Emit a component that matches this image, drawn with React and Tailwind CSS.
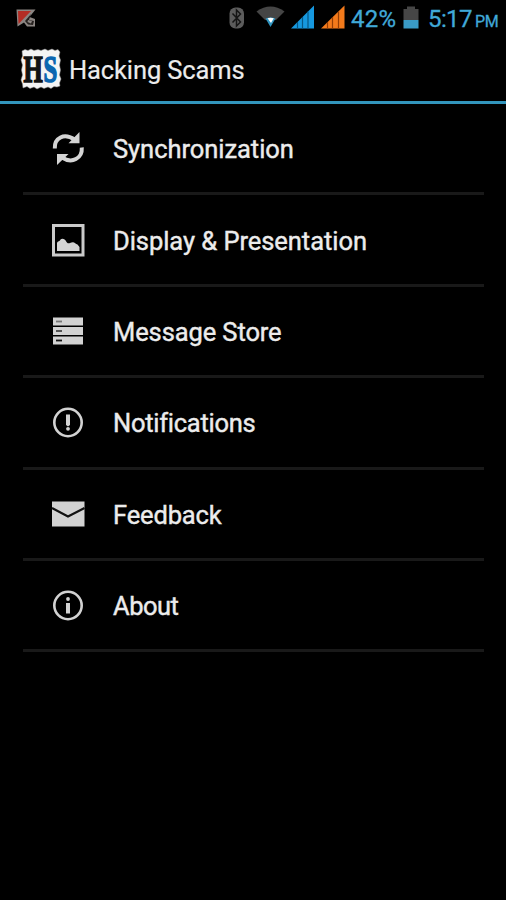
const items = [
  { label: "Synchronization", tracking: "tracking-[-0.05px]", Icon: SyncIcon },
  { label: "Display & Presentation", tracking: "tracking-[-0.05px]", Icon: PictureIcon },
  { label: "Message Store", tracking: "tracking-[-0.1px]", Icon: StoreIcon },
  { label: "Notifications", tracking: "tracking-[-0.27px]", Icon: AlertIcon },
  { label: "Feedback", tracking: "tracking-[-0.15px]", Icon: MailIcon },
  { label: "About", tracking: "tracking-[-0.5px]", Icon: InfoIcon },
]

export default function App() {
  return (
    <div className="h-[900px] w-[506px] overflow-hidden bg-black font-['Roboto',sans-serif]">
      <StatusBar />

      {/* HEADER */}
      <header className="flex h-[67px] items-center border-b-3 border-[#3295bc] pl-5">
        <Logo />
        <h1 className="ml-[7px] pt-[2px] text-[25.5px] leading-8 tracking-[-0.12px] text-[#ececec] [-webkit-text-stroke:0.2px_#ececec]">Hacking Scams</h1>
      </header>

      {/* SETTINGS */}
      <ul className="pl-[23px] pr-[22px]">
        {items.map(({ label, tracking, Icon }) => (
          <li key={label} className="flex h-[91.4px] items-center border-b-3 border-[#191919] pl-[27px]">
            <Icon />
            <span className={`ml-[27px] pt-[2px] text-[25.5px] leading-8 text-[#ececec] [-webkit-text-stroke:0.4px_#ececec] ${tracking}`}>{label}</span>
          </li>
        ))}
      </ul>
    </div>
  )
}

function StatusBar() {
  return (
    <div className="flex h-[37px] items-center whitespace-nowrap text-[#40a9d8] [-webkit-text-stroke:0.3px_#40a9d8]">
      <svg className="ml-4 h-[37px] w-5" viewBox="16 0 20 37">
        <path d="M16.500 9.500H35.500L29.500 17L35 19V26.500H27L24 22.500L17.500 26.500Z" fill="#8b8582" />
        <path d="M18 11H31L18.500 24Z" fill="#b42d25" />
        <path d="M25 21L31 14L29 20L34 21L33 25L28 24.500Z" fill="#26211f" />
        <path d="M28 20L32 21L31 23.500L27.500 22Z" fill="#8b8582" />
      </svg>

      <svg className="ml-[192px] h-[37px] w-[118px]" viewBox="228 0 118 37">
        <rect x="229.500" y="7.500" width="14.500" height="21" rx="6" fill="#5c5c5c" />
        <path d="M232.500 13.500L240.500 22L236.500 26V10L240.500 14L232.500 22.500" fill="none" stroke="#151515" strokeWidth="1.500" />
        <path d="M256.500 11.500Q270.500 1.500 284.500 11.500L276 20H265Z" fill="#454545" />
        <path d="M265.500 18.500Q270.500 16.500 275.500 18.500L270.500 27Z" fill="#2e93bf" />
        <path d="M267.500 18.200Q270.500 17.200 273.800 18.200L271 23Z" fill="#fff" />
        <path d="M291 28.500L314 5.500V28.500Z" fill="#1698df" />
        <path d="M297.500 22V28.500M302.500 17V28.500M308 11.500V28.500" stroke="#075784" strokeWidth="1.200" />
        <path d="M321 28.500L344.500 5.500V28.500Z" fill="#f37a1b" />
        <path d="M327.500 22V28.500M332.500 17V28.500M338.500 11.500V28.500" stroke="#943e05" strokeWidth="1.200" />
      </svg>

      <span className="ml-[5px] w-[46px] pt-[2px] text-2xl leading-[37px] tracking-[0.2px]">42%</span>

      <svg className="ml-[6px] h-[37px] w-4" viewBox="403 0 16 37">
        <path d="M403.500 9H407V6.500H415V9H418.500V20H403.500Z" fill="#464646" />
        <rect x="403.500" y="20" width="15" height="8.500" fill="#3a9bc6" />
      </svg>

      <div className="ml-[9px] flex items-baseline pt-[3px]">
        <span className="w-[47px] text-2xl leading-[37px] tracking-[-0.6px]">5:17</span>
        <span className="text-base leading-[37px] tracking-[-0.3px]">PM</span>
      </div>
    </div>
  )
}

function Logo() {
  return (
    <svg className="h-[42px] w-[42px]" viewBox="0 0 42 42">
      <path
        d="M2 3L5 1.500L8 2.500L11 1L14 2.500L18 1.500L21 2.500L25 1L28 2.500L32 1L35 2.500L38 1.500L40 4L39 8L40.500 12L39.500 17L40.500 22L39.500 27L41 31L39.500 35L40 38L37 39L34 38.500L31 40.500L28 39L24 40.500L21 39L17 41L14 39L10 40.500L7 38.500L3 40L2.500 36L1 32L2.500 27L1.500 22L2.500 17L1 12L2.500 8Z"
        fill="#f4f4f4"
        stroke="#8c8c8c"
        strokeWidth="0.500"
      />
      <g transform="scale(0.65 1)" fontFamily="Liberation Serif, serif" fontWeight="700" fontSize="38">
        <text x="5.500" y="33.500" fill="#111" stroke="#111" strokeWidth="1.600">H</text>
        <text x="36" y="33.500" fill="#0b66b0" stroke="#0b66b0" strokeWidth="1.600">S</text>
      </g>
    </svg>
  )
}

function IconBox({ children }) {
  return (
    <svg className="h-9 w-9 shrink-0" viewBox="0 0 36 36" fill="none">
      {children}
    </svg>
  )
}

function SyncIcon() {
  return (
    <IconBox>
      <path d="M4.800 18.500C4.200 8 14 2.500 24.500 9.500" stroke="#d4d4d4" strokeWidth="4" />
      <path d="M29.500 2V13.300H18.500Z" fill="#d4d4d4" />
      <path d="M31.800 17.500C32.500 28.500 22 34 12 27.500" stroke="#d4d4d4" strokeWidth="4" />
      <path d="M7 35V24H18.500Z" fill="#d4d4d4" />
    </IconBox>
  )
}

function PictureIcon() {
  return (
    <IconBox>
      <rect x="3.500" y="3.500" width="29.500" height="29.500" stroke="#cacaca" strokeWidth="3" />
      <path d="M7 29V21C8 18.500 9.500 20 10.500 17.500C12 16 15 16.500 16.500 20C18 22.500 20 20.500 22 20.500C24 19.500 25.500 22 27.500 22.500L29.500 25V29Z" fill="#d4d4d4" />
    </IconBox>
  )
}

function StoreIcon() {
  return (
    <IconBox>
      <path d="M3 4.500H33V12.500H3ZM3 14H33V22H3ZM3 23.500H33V31.500H3Z" fill="#d2d2d2" />
      <path d="M6 8.500H12" stroke="#777" strokeWidth="1.800" />
      <path d="M6 18H12" stroke="#444" strokeWidth="1.800" />
      <path d="M6 27.500H12" stroke="#111" strokeWidth="1.800" />
    </IconBox>
  )
}

function AlertIcon() {
  return (
    <IconBox>
      <circle cx="18" cy="18.500" r="13.700" stroke="#d2d2d2" strokeWidth="2.600" />
      <path d="M16 10.500H20V21L18 22.500L16 21Z" fill="#d2d2d2" />
      <circle cx="18" cy="24.800" r="1.900" fill="#d2d2d2" />
    </IconBox>
  )
}

function MailIcon() {
  return (
    <IconBox>
      <rect x="2" y="5.500" width="32.500" height="25" fill="#d2d2d2" />
      <path d="M2 12L18 20.500L34.500 12" stroke="#111" strokeWidth="2.200" />
    </IconBox>
  )
}

function InfoIcon() {
  return (
    <IconBox>
      <circle cx="18" cy="18.500" r="13.700" stroke="#d2d2d2" strokeWidth="2.600" />
      <circle cx="18" cy="12" r="1.900" fill="#d2d2d2" />
      <path d="M16 16H20V26.500H16Z" fill="#d2d2d2" />
    </IconBox>
  )
}
